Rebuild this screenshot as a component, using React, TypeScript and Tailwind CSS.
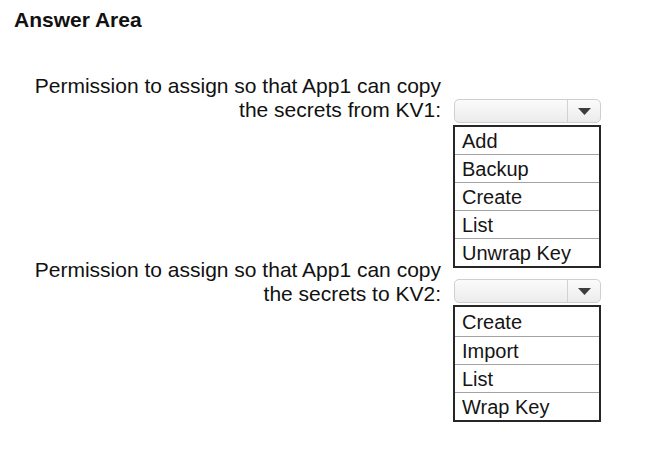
import React from "react";

function Select() {
  return (
    <div className="flex h-[24px] w-[147px] ml-[1px] rounded-[5px] border border-[#cfcfcf] bg-gradient-to-b from-[#fbfbfb] to-[#ececec]">
      <div className="flex-1" />
      <div className="flex w-[33px] items-center justify-center border-l border-[#d2d2d2]">
        <svg width="13" height="7" viewBox="0 0 13 7">
          <polygon points="0,0 13,0 6.5,7" fill="#3d3d3d" />
        </svg>
      </div>
    </div>
  );
}

function List({ items, firstH }: { items: string[]; firstH: string }) {
  return (
    <div className="mt-[2px] w-[148px] border-2 border-[#262626] bg-white">
      {items.map((it, i) => (
        <div
          key={it}
          className={
            "flex items-center pl-[7px] text-[20px] leading-none text-[#151515] " +
            (i === 0 ? firstH : "h-[28px] border-t border-[#a3a3a3]")
          }
        >
          {it}
        </div>
      ))}
    </div>
  );
}

export default function App() {
  return (
    <div className="min-h-[476px] w-[647px] bg-white pt-[8px] font-['Liberation_Sans',Arial,sans-serif] text-[#111]">
      <div className="pl-[14px] text-[21px] font-bold leading-[24px]">Answer Area</div>
      <div className="mt-[42px] flex gap-[12px]">
        <div className="w-[441px] text-right text-[21px] leading-[24px] whitespace-nowrap">
          <div>Permission to assign so that App1 can copy</div>
          <div>the secrets from KV1:</div>
          <div className="mt-[136px]">Permission to assign so that App1 can copy</div>
          <div>the secrets to KV2:</div>
        </div>
        <div className="flex flex-col pt-[25px]">
          <Select />
          <List items={["Add", "Backup", "Create", "List", "Unwrap Key"]} firstH="h-[27px]" />
          <div className="mt-[11px]">
            <Select />
          </div>
          <List items={["Create", "Import", "List", "Wrap Key"]} firstH="h-[29px]" />
        </div>
      </div>
    </div>
  );
}
